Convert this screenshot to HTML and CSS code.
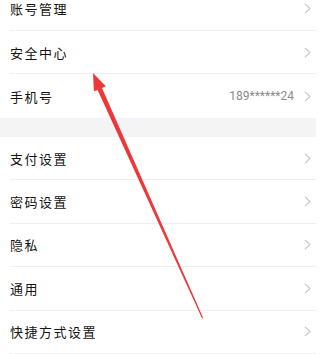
FILE: index.html
```html
<!DOCTYPE html>
<html lang="zh-CN">
<head>
<meta charset="utf-8">
<title>设置</title>
<link rel="stylesheet" href="styles.css">
</head>
<body>
<div class="screen">
  <div class="group first">
    <div class="row"><span class="label">账号管理</span><svg class="chev" viewBox="0 0 7 11"><polyline points="1,0.8 6,5.5 1,10.2"/></svg></div>
    <div class="row"><span class="label">安全中心</span><svg class="chev" viewBox="0 0 7 11"><polyline points="1,0.8 6,5.5 1,10.2"/></svg></div>
    <div class="row last"><span class="label">手机号</span><span class="value">189******24</span><svg class="chev" viewBox="0 0 7 11"><polyline points="1,0.8 6,5.5 1,10.2"/></svg></div>
  </div>
  <div class="band"></div>
  <div class="group">
    <div class="row"><span class="label">支付设置</span><svg class="chev" viewBox="0 0 7 11"><polyline points="1,0.8 6,5.5 1,10.2"/></svg></div>
    <div class="row"><span class="label">密码设置</span><svg class="chev" viewBox="0 0 7 11"><polyline points="1,0.8 6,5.5 1,10.2"/></svg></div>
    <div class="row"><span class="label">隐私</span><svg class="chev" viewBox="0 0 7 11"><polyline points="1,0.8 6,5.5 1,10.2"/></svg></div>
    <div class="row"><span class="label">通用</span><svg class="chev" viewBox="0 0 7 11"><polyline points="1,0.8 6,5.5 1,10.2"/></svg></div>
    <div class="row"><span class="label">快捷方式设置</span><svg class="chev" viewBox="0 0 7 11"><polyline points="1,0.8 6,5.5 1,10.2"/></svg></div>
  </div>
  <svg class="arrow" viewBox="0 0 316 354" width="316" height="354">
    <polygon points="93,73 105.8,86.3 102.0,88.0 203.1,317.8 202.0,318.3 97.6,89.9 93.9,91.3"/>
  </svg>
</div>
</body>
</html>
```
FILE: styles.css
```css
html, body {
  margin: 0;
  padding: 0;
  background: #ffffff;
}
.screen {
  position: relative;
  width: 316px;
  height: 354px;
  overflow: hidden;
  font-family: "Noto Sans CJK SC", "Noto Sans", sans-serif;
}
.group {
  display: flex;
  flex-direction: column;
}
.group.first {
  margin-top: -12.4px;
}
.row {
  box-sizing: border-box;
  height: 43.4px;
  margin-left: 10px;
  padding-right: 5px;
  display: flex;
  align-items: center;
  border-bottom: 1px solid #efefef;
}
.row.last {
  border-bottom: none;
}
.label {
  flex: 1;
  font-size: 13px;
  letter-spacing: 1.5px;
  color: #141414;
}
.value {
  font-family: "Roboto", "Liberation Sans", sans-serif;
  font-size: 12px;
  color: #8a8a8a;
  margin-right: 10px;
}
.chev {
  width: 7px;
  height: 11px;
  fill: none;
  stroke: #c6c6c6;
  stroke-width: 1.1;
}
.band {
  height: 19.2px;
  background: #f4f4f7;
}
.arrow {
  position: absolute;
  left: 0;
  top: 0;
  fill: #ec3838;
}
```
